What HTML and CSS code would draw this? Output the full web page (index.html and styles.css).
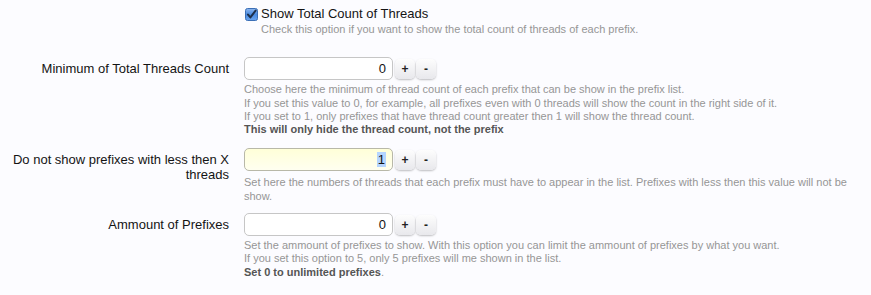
FILE: index.html
```html
<!DOCTYPE html>
<html>
<head>
<meta charset="utf-8">
<link rel="stylesheet" href="styles.css">
</head>
<body>
<div class="form">
  <dl class="unit unit-check">
    <dt></dt>
    <dd>
      <label class="check">
        <svg class="box" width="13" height="13" viewBox="0 0 13 13">
          <defs>
            <linearGradient id="cb" x1="0" y1="0" x2="0" y2="1">
              <stop offset="0" stop-color="#8fb8ef"/>
              <stop offset="0.5" stop-color="#4a8ae0"/>
              <stop offset="1" stop-color="#6aa4ee"/>
            </linearGradient>
          </defs>
          <rect x="0.5" y="0.5" width="12" height="12" rx="2" fill="url(#cb)" stroke="#3b6fb6"/>
          <path d="M3 6.6 L5.4 9.4 L10.6 2.6" fill="none" stroke="#1d2f4a" stroke-width="2" stroke-linecap="round" stroke-linejoin="round"/>
        </svg>
        <span>Show Total Count of Threads</span>
      </label>
      <p class="hint indent">Check this option if you want to show the total count of threads of each prefix.</p>
    </dd>
  </dl>

  <dl class="unit">
    <dt>Minimum of Total Threads Count</dt>
    <dd>
      <div class="spin">
        <div class="field"><span>0</span></div>
        <span class="btn">+</span>
        <span class="btn">-</span>
      </div>
      <p class="hint">Choose here the minimum of thread count of each prefix that can be show in the prefix list.<br>If you set this value to 0, for example, all prefixes even with 0 threads will show the count in the right side of it.<br>If you set to 1, only prefixes that have thread count greater then 1 will show the thread count.<br><strong>This will only hide the thread count, not the prefix</strong></p>
    </dd>
  </dl>

  <dl class="unit unit-mid">
    <dt>Do not show prefixes with less then X threads</dt>
    <dd>
      <div class="spin">
        <div class="field focus"><span class="sel">1</span></div>
        <span class="btn">+</span>
        <span class="btn">-</span>
      </div>
      <p class="hint">Set here the numbers of threads that each prefix must have to appear in the list. Prefixes with less then this value will not be show.</p>
    </dd>
  </dl>

  <dl class="unit">
    <dt>Ammount of Prefixes</dt>
    <dd>
      <div class="spin">
        <div class="field"><span>0</span></div>
        <span class="btn">+</span>
        <span class="btn">-</span>
      </div>
      <p class="hint">Set the ammount of prefixes to show. With this option you can limit the ammount of prefixes by what you want.<br>If you set this option to 5, only 5 prefixes will me shown in the list.<br><strong>Set 0 to unlimited prefixes</strong>.</p>
    </dd>
  </dl>
</div>
</body>
</html>
```

FILE: styles.css
```css
html, body {
  margin: 0;
  padding: 0;
  background: #fcfcff;
}
body {
  font-family: "Liberation Sans", Arial, sans-serif;
  color: #141414;
}
.form {
  padding-top: 6px;
}
.unit {
  display: grid;
  grid-template-columns: 229px 615px;
  column-gap: 15px;
  margin: 0 0 12px 0;
}
.unit-check {
  margin-bottom: 21px;
}
.unit-mid {
  margin-bottom: 10px;
}
.unit-mid .hint {
  margin-top: 5px;
}
.unit dt {
  text-align: right;
  font-size: 13px;
  line-height: 15px;
  padding-top: 4px;
  margin: 0;
}
.unit dd {
  margin: 0;
}
.check {
  display: flex;
  align-items: center;
  gap: 3px;
  font-size: 13px;
  line-height: 16px;
  padding-left: 1px;
}
.box {
  flex: none;
}
.hint {
  margin: 3px 0 0 0;
  font-size: 11px;
  line-height: 13.3px;
  color: #969696;
}
.hint strong {
  color: #555;
}
.hint.indent {
  padding-left: 17px;
  margin-top: 1px;
}
.spin {
  display: flex;
  align-items: center;
  gap: 1px;
}
.field {
  box-sizing: border-box;
  width: 149px;
  height: 23px;
  border: 1px solid #c6c6c6;
  border-radius: 5px;
  background: #fff;
  display: flex;
  align-items: center;
  justify-content: flex-end;
  padding-right: 6px;
  font-size: 13px;
  margin-right: 1px;
}
.field.focus {
  background: linear-gradient(to bottom, #ffffd8, #fffff0);
  border-color: #b8b8a8;
}
.sel {
  background: #b5d5ff;
  padding: 0 1px;
}
.btn {
  box-sizing: border-box;
  width: 20px;
  height: 20px;
  border-radius: 5px;
  background: linear-gradient(to bottom, #fdfdfd, #e8e8ec);
  box-shadow: 0 1px 2px rgba(0,0,0,0.25);
  display: flex;
  align-items: center;
  justify-content: center;
  font-size: 12px;
  font-weight: bold;
  color: #222;
}
```
